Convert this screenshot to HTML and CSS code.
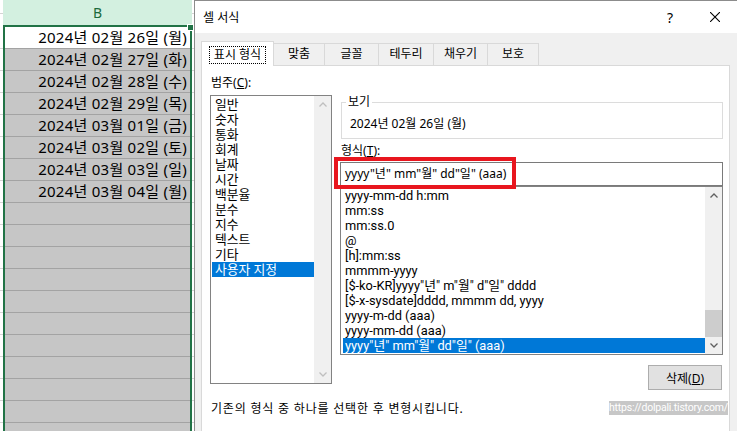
FILE: index.html
```html
<!DOCTYPE html>
<html>
<head>
  <meta charset="UTF-8">
  <title>셀 서식</title>
  <link rel="stylesheet" href="styles.css">
</head>
<body>
  <div class="screen">
    <!-- Worksheet column B behind the dialog -->
    <div class="sheet">
      <div class="col-header">B</div>
      <div class="cells">
        <div class="cell active">2024년 02월 26일 (월)</div>
        <div class="cell">2024년 02월 27일 (화)</div>
        <div class="cell">2024년 02월 28일 (수)</div>
        <div class="cell">2024년 02월 29일 (목)</div>
        <div class="cell">2024년 03월 01일 (금)</div>
        <div class="cell">2024년 03월 02일 (토)</div>
        <div class="cell">2024년 03월 03일 (일)</div>
        <div class="cell">2024년 03월 04일 (월)</div>
        <div class="cell"></div>
        <div class="cell"></div>
        <div class="cell"></div>
        <div class="cell"></div>
        <div class="cell"></div>
        <div class="cell"></div>
        <div class="cell"></div>
        <div class="cell"></div>
        <div class="cell"></div>
        <div class="cell"></div>
        <div class="cell"></div>
      </div>
      <div class="fill-handle"></div>
    </div>

    <!-- Format Cells dialog -->
    <div class="dialog">
      <div class="titlebar">
        <span class="title">셀 서식</span>
        <span class="title-btn">?</span>
        <span class="title-btn close">
          <svg width="10" height="10" viewBox="0 0 10 10"><path d="M0 0L10 10M10 0L0 10" stroke="#000" stroke-width="1.1" fill="none"/></svg>
        </span>
      </div>

      <div class="dialog-body">
        <div class="tabs">
          <div class="tab selected w1"><span class="focus">표시 형식</span></div>
          <div class="tab w2">맞춤</div>
          <div class="tab w3">글꼴</div>
          <div class="tab w4">테두리</div>
          <div class="tab w3">채우기</div>
          <div class="tab w2">보호</div>
        </div>

        <div class="panel">
          <div class="panel-grid">
            <div class="category">
              <div class="label">범주(<u>C</u>):</div>
              <div class="listbox categories">
                <ul class="items">
                  <li>일반</li>
                  <li>숫자</li>
                  <li>통화</li>
                  <li>회계</li>
                  <li>날짜</li>
                  <li>시간</li>
                  <li>백분율</li>
                  <li>분수</li>
                  <li>지수</li>
                  <li>텍스트</li>
                  <li>기타</li>
                  <li class="selected">사용자 지정</li>
                </ul>
                <div class="vscroll disabled">
                  <div class="sb-btn"><svg width="8" height="5" viewBox="0 0 8 5"><polyline points="0.5,4.5 4,1 7.5,4.5" /></svg></div>
                  <div class="sb-track"></div>
                  <div class="sb-btn"><svg width="8" height="5" viewBox="0 0 8 5"><polyline points="0.5,0.5 4,4 7.5,0.5" /></svg></div>
                </div>
              </div>
            </div>

            <div class="format">
              <fieldset class="sample">
                <legend>보기</legend>
                <div class="sample-value">2024년 02월 26일 (월)</div>
              </fieldset>
              <div class="label">형식(<u>T</u>):</div>
              <div class="format-field">
                <div class="format-input">yyyy"년" mm"월" dd"일" (aaa)</div>
                <div class="listbox format-list">
                  <ul class="items">
                    <li>yyyy-mm-dd h:mm</li>
                    <li>mm:ss</li>
                    <li>mm:ss.0</li>
                    <li>@</li>
                    <li>[h]:mm:ss</li>
                    <li>mmmm-yyyy</li>
                    <li>[$-ko-KR]yyyy"년" m"월" d"일" dddd</li>
                    <li>[$-x-sysdate]dddd, mmmm dd, yyyy</li>
                    <li>yyyy-m-dd (aaa)</li>
                    <li>yyyy-mm-dd (aaa)</li>
                    <li class="selected">yyyy"년" mm"월" dd"일" (aaa)</li>
                  </ul>
                  <div class="vscroll">
                    <div class="sb-btn"><svg width="8" height="5" viewBox="0 0 8 5"><polyline points="0.5,4.5 4,1 7.5,4.5" /></svg></div>
                    <div class="sb-track"><div class="sb-thumb"></div></div>
                    <div class="sb-btn"><svg width="8" height="5" viewBox="0 0 8 5"><polyline points="0.5,0.5 4,4 7.5,0.5" /></svg></div>
                  </div>
                </div>
                <div class="callout"></div>
              </div>
              <div class="actions">
                <button>삭제(<u>D</u>)</button>
              </div>
            </div>
          </div>

          <p class="hint">기존의 형식 중 하나를 선택한 후 변형시킵니다.</p>
        </div>
      </div>
    </div>

    <div class="watermark">https://dolpali.tistory.com/</div>
  </div>
</body>
</html>
```

FILE: styles.css
```css
* {
  box-sizing: border-box;
}

body {
  margin: 0;
  font-family: "Noto Sans", "Noto Sans CJK KR", sans-serif;
  font-size: 12px;
  color: #000;
  background-color: #f0f0f0;
}

.screen {
  position: relative;
  display: flex;
  width: 737px;
  height: 431px;
  overflow: hidden;
}

/* Worksheet */
.sheet {
  position: relative;
  flex: 0 0 194px;
  background-color: #fff;
  background-image: repeating-linear-gradient(to bottom, transparent 0 21px, #d4d4d4 21px 22px);
  background-position: 0 27px;
}

.col-header {
  height: 27px;
  margin: 0 2px 0 3px;
  background-color: #d3f0e0;
  border-bottom: 2px solid #217346;
  color: #1b6a3c;
  font-size: 14px;
  line-height: 25px;
  text-align: center;
}

.cells {
  margin: 0 2px 0 3px;
  border-left: 2px solid #217346;
  border-right: 2px solid #217346;
}

.cell {
  height: 22px;
  padding-right: 3px;
  background-color: #c6c6c6;
  border-bottom: 1px solid #a3a3a3;
  font-size: 15px;
  letter-spacing: 0.25px;
  line-height: 21px;
  text-align: right;
  white-space: nowrap;
}

.cell.active {
  background-color: #fff;
}

.fill-handle {
  position: absolute;
  top: 24px;
  left: 187px;
  width: 7px;
  height: 7px;
  background-color: #217346;
  border: 1px solid #fff;
}

/* Dialog */
.dialog {
  flex: 1;
  display: flex;
  flex-direction: column;
  border-left: 1px solid #8c8c8c;
  border-top: 1px solid #8c8c8c;
  background-color: #f0f0f0;
  box-shadow: -3px 0 6px rgba(0, 0, 0, 0.12);
}

.titlebar {
  display: flex;
  align-items: center;
  height: 32px;
  padding-left: 8px;
  background-color: #fff;
}

.title {
  flex: 1;
}

.title-btn {
  display: flex;
  align-items: center;
  justify-content: center;
  width: 46px;
  height: 32px;
  font-size: 14px;
}

.title-btn.close {
  width: 44px;
}

.dialog-body {
  flex: 1;
  display: flex;
  flex-direction: column;
  padding: 8px 7px 0 6px;
}

/* Tabs */
.tabs {
  display: flex;
  align-items: flex-end;
  height: 24px;
}

.tab {
  height: 22px;
  margin-right: -1px;
  border: 1px solid #d9d9d9;
  border-bottom: none;
  background-color: #f0f0f0;
  line-height: 20px;
  text-align: center;
}

.tab.w1 { width: 73px; }
.tab.w2 { width: 52px; }
.tab.w3 { width: 55px; }
.tab.w4 { width: 56px; }

.tab.selected {
  position: relative;
  z-index: 1;
  height: 25px;
  margin-bottom: -1px;
  padding-top: 3px;
  background-color: #fff;
}

.focus {
  display: inline-block;
  padding: 0 4px;
  border: 1px dotted #000;
  line-height: 16px;
}

/* Tab panel */
.panel {
  flex: 1;
  padding: 9px 6px 0 8px;
  background-color: #fff;
  border: 1px solid #d9d9d9;
  border-bottom: none;
}

.panel-grid {
  display: grid;
  grid-template-columns: 122px 383px;
  column-gap: 8px;
  align-items: start;
}

.label {
  padding-left: 1px;
  line-height: 16px;
}

.listbox {
  display: flex;
  border: 1px solid #828282;
  background-color: #fff;
}

.categories {
  height: 289px;
  margin-top: 4px;
}

.items {
  flex: 1;
  min-width: 0;
  margin: 0;
  padding: 1px 0 0 1px;
  list-style: none;
  overflow: hidden;
  font-family: Roboto, "Noto Sans CJK KR", sans-serif;
  font-size: 12.8px;
}

.items li {
  height: 15px;
  padding-left: 3px;
  line-height: 15px;
  white-space: nowrap;
}

.items li.selected {
  background-color: #0078d7;
  color: #fff;
}

.vscroll {
  display: flex;
  flex-direction: column;
  flex: 0 0 17px;
  background-color: #f0f0f0;
}

.sb-btn {
  display: flex;
  align-items: center;
  justify-content: center;
  height: 17px;
}

.sb-btn polyline {
  fill: none;
  stroke: #606060;
  stroke-width: 1.3;
}

.vscroll.disabled polyline {
  stroke: #bfbfbf;
}

.sb-track {
  flex: 1;
  display: flex;
  flex-direction: column;
  justify-content: flex-end;
}

.sb-thumb {
  height: 27px;
  background-color: #cdcdcd;
}

/* Sample group */
.sample {
  margin: 19px 0 0 1px;
  padding: 6px 8px 6px 4px;
  border: 1px solid #dcdcdc;
}

.sample legend {
  padding: 0 2px;
  line-height: 16px;
}

.sample-value {
  padding-left: 4px;
  line-height: 16px;
}

.sample + .label {
  margin-top: 4px;
}

/* Format field */
.format-field {
  position: relative;
  margin-top: 3px;
}

.format-input {
  height: 24px;
  padding: 0 4px;
  border: 1px solid #7a7a7a;
  line-height: 22px;
  white-space: nowrap;
}

.format-list {
  height: 169px;
}

.format-list .items {
  padding-left: 2px;
}

.format-list .items li {
  padding-left: 2px;
}

.callout {
  position: absolute;
  top: -5px;
  left: -6px;
  width: 182px;
  height: 32px;
  border: 4px solid #e8161e;
}

.actions {
  display: flex;
  justify-content: flex-end;
  margin-top: 10px;
}

button {
  width: 74px;
  height: 25px;
  margin-right: 1px;
  padding: 0;
  border: 1px solid #adadad;
  background-color: #e1e1e1;
  font-family: "Noto Sans", "Noto Sans CJK KR", sans-serif;
  font-size: 12px;
  color: #000;
}

.hint {
  margin: 11px 0 0 1px;
  line-height: 16px;
  letter-spacing: 0.8px;
}

.watermark {
  position: absolute;
  top: 401px;
  left: 609px;
  width: 119px;
  height: 14px;
  background-color: rgba(0, 0, 0, 0.22);
  color: #fff;
  font-family: Roboto, sans-serif;
  font-size: 10.5px;
  letter-spacing: -0.2px;
  line-height: 14px;
  text-align: center;
  white-space: nowrap;
  overflow: hidden;
}
```
